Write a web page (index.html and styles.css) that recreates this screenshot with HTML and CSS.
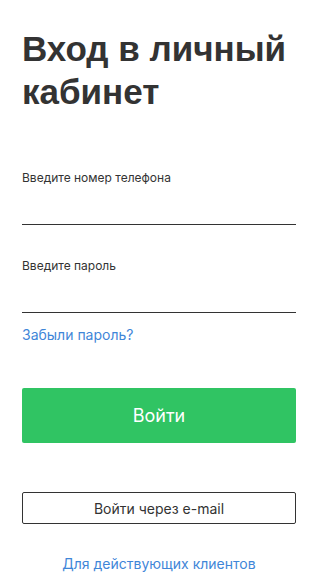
FILE: index.html
```html
<!DOCTYPE html>
<html lang="ru">
<head>
<meta charset="utf-8">
<title>Вход в личный кабинет</title>
<link rel="stylesheet" href="styles.css">
</head>
<body>
<main class="page">
  <h1 class="title">Вход в личный кабинет</h1>
  <form class="form">
    <label class="field">
      <span class="field-label">Введите номер телефона</span>
      <input class="field-input" type="tel">
    </label>
    <label class="field field-second">
      <span class="field-label">Введите пароль</span>
      <input class="field-input" type="password">
    </label>
    <a class="link forgot" href="#">Забыли пароль?</a>
    <button class="btn-primary" type="button">Войти</button>
    <button class="btn-outline" type="button">Войти через e-mail</button>
    <a class="link clients" href="#">Для действующих клиентов</a>
  </form>
</main>
</body>
</html>
```
FILE: styles.css
```css
* { box-sizing: border-box; }
html, body { margin: 0; padding: 0; background: #fff; }
body { font-family: Inter, "Noto Sans", sans-serif; color: #333; }
.page { padding: 27px 23px 0 22px; width: 319px; }
.title {
  margin: 0;
  font-family: "Liberation Sans", Arial, sans-serif;
  font-weight: 700;
  font-size: 35px;
  line-height: 43px;
  color: #333;
}
.form { display: flex; flex-direction: column; margin-top: 57px; }
.field { display: flex; flex-direction: column; }
.field-second { margin-top: 33px; }
.field-label { font-size: 12px; line-height: 16px; color: #333; }
.field-input {
  height: 39px;
  border: none;
  border-bottom: 1px solid #333;
  outline: none;
  padding: 0;
  font: inherit;
  background: transparent;
}
.link { color: #3f86d8; text-decoration: none; font-size: 14px; line-height: 20px; }
.forgot { margin-top: 12px; align-self: flex-start; }
.btn-primary {
  margin-top: 43px;
  height: 55px;
  border: none;
  border-radius: 2px;
  background: #30c463;
  color: #fff;
  font-family: Inter, sans-serif;
  font-size: 18px;
}
.btn-outline {
  margin-top: 49px;
  height: 32px;
  border: 1px solid #333;
  border-radius: 2px;
  background: #fff;
  color: #333;
  font-family: Inter, sans-serif;
  font-size: 14px;
}
.clients { margin-top: 30px; align-self: center; }
```
